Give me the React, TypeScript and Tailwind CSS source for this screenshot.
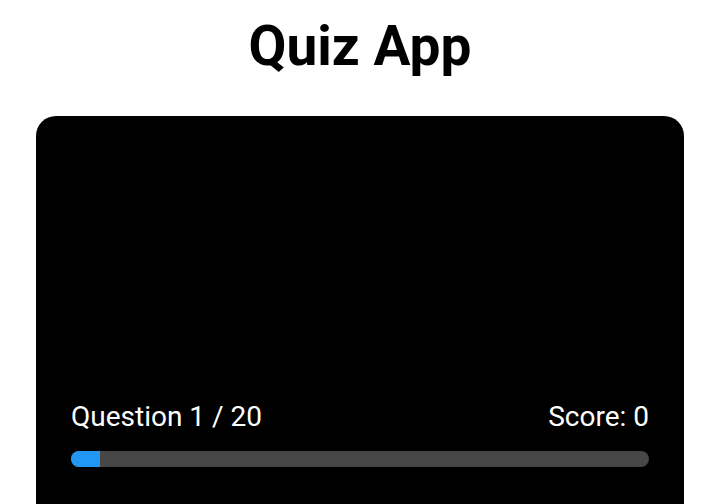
import React from "react";

const App: React.FC = () => {
  const current = 1;
  const total = 20;
  const score = 0;
  const progress = (current / total) * 100;

  return (
    <div
      className="min-h-screen bg-white flex flex-col items-center"
      style={{ fontFamily: "Roboto, 'Liberation Sans', sans-serif" }}
    >
      <h1 className="mt-[14px] text-[55px] leading-[64px] font-bold text-black">
        Quiz App
      </h1>

      <div className="mt-[38px] w-[648px] bg-black rounded-[20px] px-[35px] pt-[35px] pb-[60px]">
        <div className="h-[249px]" />

        <div className="flex items-center justify-between text-white text-[28px] leading-[33px]">
          <span>
            Question {current} / {total}
          </span>
          <span>Score: {score}</span>
        </div>

        <div className="mt-[18px] h-[16px] w-full rounded-full bg-[#474747] overflow-hidden">
          <div
            className="h-full bg-[#2196f3]"
            style={{ width: `${progress}%` }}
          />
        </div>
      </div>
    </div>
  );
};

export default App;
